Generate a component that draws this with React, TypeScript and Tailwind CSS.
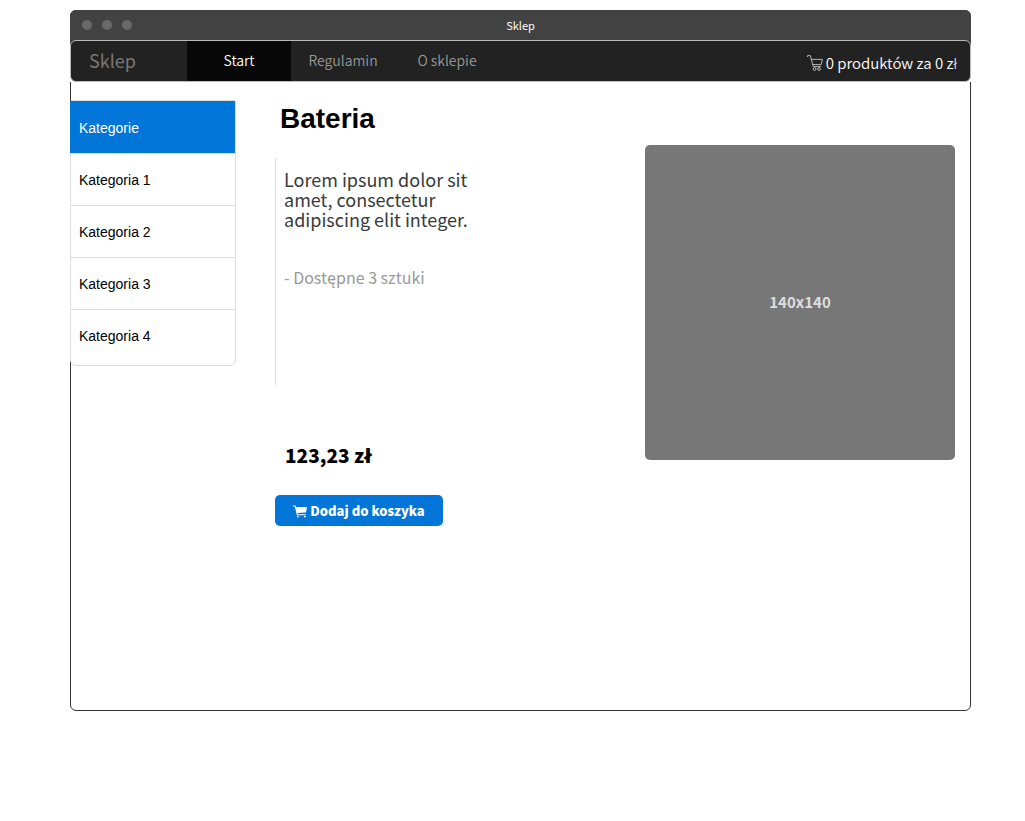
import React from 'react';

const navLinks = [
  { label: 'Start', active: true },
  { label: 'Regulamin', active: false },
  { label: 'O sklepie', active: false },
];

const categories = ['Kategoria 1', 'Kategoria 2', 'Kategoria 3', 'Kategoria 4'];

function CartOutline() {
  return (
    <svg className="h-4 w-4 shrink-0" viewBox="0 0 16 16" fill="none" stroke="#c4c4c4" strokeWidth="0.9" aria-hidden="true">
      <path d="M0.5 2V0.6H3.4L6.2 11.6H14.2M4.4 4.4H15.4L14.2 9.6H5.7" />
      <circle cx="7.6" cy="14" r="1.4" />
      <circle cx="12" cy="14" r="1.4" />
    </svg>
  );
}

function CartSolid() {
  return (
    <svg className="h-3.5 w-3.5 shrink-0" viewBox="0 0 14 14" fill="#fff" aria-hidden="true">
      <path d="M0 1.4H2.5L3.1 3H14L13 8.4L4.4 9L4.8 10.3H12.8V11.3H3.9L1.7 2.4H0Z" />
      <circle cx="4.9" cy="12.6" r="0.9" />
      <circle cx="11.9" cy="12.6" r="0.9" />
    </svg>
  );
}

export default function App() {
  return (
    <div className="pt-[10px] pr-[54px] pb-10 pl-[70px] font-['Noto_Sans_CJK_JP','Noto_Sans',sans-serif]">
      <div className="flex min-h-[701px] flex-col rounded-md border border-[#333] bg-white">
        <div className="-mx-px -mt-px rounded-t-md bg-[#424242]">
          <header className="grid h-[30px] grid-cols-3 items-center px-3">
            <div className="flex gap-[10px]">
              <span className="h-[10px] w-[10px] rounded-full bg-[#696969]" />
              <span className="h-[10px] w-[10px] rounded-full bg-[#696969]" />
              <span className="h-[10px] w-[10px] rounded-full bg-[#696969]" />
            </div>
            <h1 className="text-center text-[11px] leading-4 text-white">Sklep</h1>
          </header>
          <div className="bg-[linear-gradient(to_bottom,#424242_50%,#fff_50%)]">
            <nav className="flex h-[42px] items-stretch overflow-hidden rounded-md border border-[#bbb] bg-[#222]">
              <a href="#" className="flex w-[116px] items-center pb-0.5 pl-[18px] text-[18px] leading-6 text-[#777]">Sklep</a>
              {navLinks.map((link) => (
                <a
                  key={link.label}
                  href="#"
                  className={
                    link.active
                      ? 'flex w-[104px] items-center justify-center bg-[#080808] pb-0.5 text-[14px] leading-5 font-[350] text-white'
                      : 'flex w-[104px] items-center justify-center pb-0.5 text-[14px] leading-5 font-[350] text-[#999]'
                  }
                >
                  {link.label}
                </a>
              ))}
              <a href="#" className="ml-auto flex items-center gap-[3px] pt-1 pr-[13px] text-[15px] leading-5 font-[350] text-white">
                <CartOutline />
                0 produktów za 0 zł
              </a>
            </nav>
          </div>
        </div>

        <div className="-ml-px flex flex-1 items-start pt-[18px] pr-[15px]">
          <aside className="w-[166px] shrink-0 rounded-t-xs rounded-b-md border border-[#ddd] bg-white pb-1 font-['Liberation_Sans',Arial,sans-serif] text-[14px] leading-5">
            <h2 className="-ml-px flex h-[52px] items-center bg-[#0275d8] pt-0.5 pl-[9px] text-white">Kategorie</h2>
            <ul>
              {categories.map((name) => (
                <li key={name} className="border-t border-[#ddd]">
                  <a href="#" className="flex h-[51px] items-center pl-2 text-black">{name}</a>
                </li>
              ))}
            </ul>
          </aside>

          <main className="ml-[39px] flex flex-1 items-start justify-between">
            <section className="w-[205px]">
              <h2 className="pl-[5px] font-['Liberation_Sans',Arial,sans-serif] text-[28px] leading-[38px] font-bold text-black">Bateria</h2>
              <div className="mt-5 min-h-[227px] border-l border-[#ddd] pt-[11px] pl-2">
                <p className="text-[18px] leading-5 text-[#373a3c]">Lorem ipsum dolor sit amet, consectetur adipiscing elit integer.</p>
                <p className="mt-[38px] text-[16px] leading-5 text-[#999]">- Dostępne 3 sztuki</p>
              </div>
              <p className="mt-[58px] pl-[10px] text-[19px] leading-6 font-black text-black">123,23 zł</p>
              <button type="button" className="mt-7 flex h-[31px] w-[168px] items-center justify-center gap-[3px] rounded-[5px] bg-[#0275d8] text-[13px] leading-5 font-black text-white">
                <CartSolid />
                Dodaj do koszyka
              </button>
            </section>
            <div className="mt-[45px] flex h-[315px] w-[310px] items-center justify-center rounded-[5px] bg-[#777] pb-0.5 text-[15px] leading-5 font-bold text-[#ddd]">
              140x140
            </div>
          </main>
        </div>
      </div>
    </div>
  );
}
